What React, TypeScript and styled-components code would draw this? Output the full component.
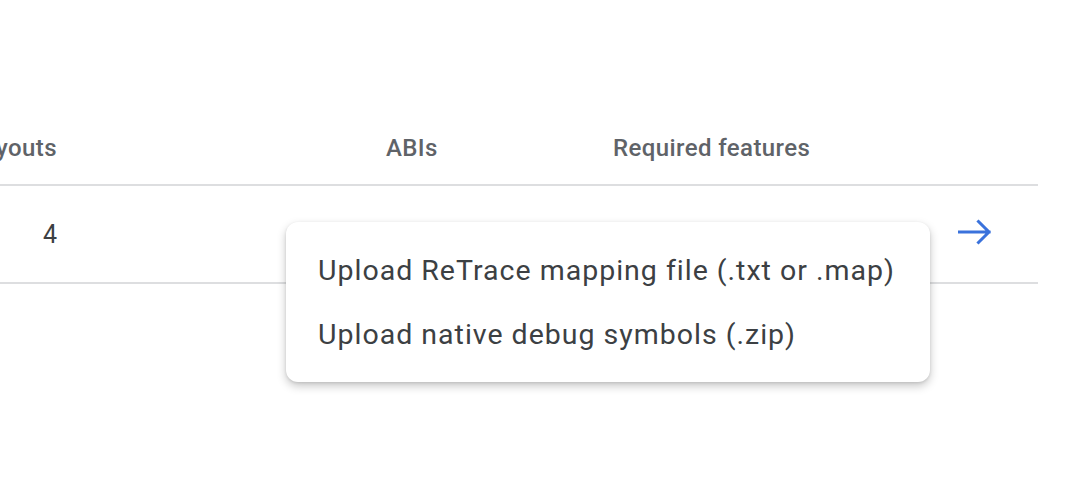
import React from "react";
import styled, { createGlobalStyle } from "styled-components";

const GlobalStyle = createGlobalStyle`
  html, body {
    margin: 0;
    padding: 0;
    background: #ffffff;
    overflow: hidden;
  }
  body {
    font-family: Roboto, "Noto Sans", "Liberation Sans", sans-serif;
  }
`;

const Page = styled.div`
  width: 1068px;
  height: 482px;
  padding-top: 112px;
  box-sizing: border-box;
`;

const Table = styled.div`
  position: relative;
  width: 1038px;
`;

const Row = styled.div<{ $head?: boolean }>`
  display: grid;
  grid-template-columns: 57px 329px 227px 345px 80px;
  align-items: center;
  height: ${(p) => (p.$head ? "72px" : "96px")};
  border-bottom: 2px solid #dddee0;
`;

const HeadCell = styled.div<{ $right?: boolean }>`
  color: #5f6368;
  font-size: 24px;
  font-weight: 500;
  letter-spacing: 0.4px;
  white-space: nowrap;
  direction: ${(p) => (p.$right ? "rtl" : "ltr")};
  text-align: ${(p) => (p.$right ? "right" : "left")};
`;

const Cell = styled.div<{ $right?: boolean }>`
  color: #3c4043;
  font-size: 25px;
  white-space: nowrap;
  text-align: ${(p) => (p.$right ? "right" : "left")};
`;

const ArrowButton = styled.div`
  display: flex;
  align-items: center;
  padding-bottom: 4px;
`;

const Menu = styled.ul`
  position: absolute;
  left: 286px;
  top: 110px;
  width: 644px;
  margin: 0;
  padding: 16px 0;
  list-style: none;
  background: #ffffff;
  border-radius: 12px;
  box-shadow: 0 4px 10px rgba(0, 0, 0, 0.22), 0 1px 3px rgba(0, 0, 0, 0.1);
`;

const MenuItem = styled.li`
  height: 64px;
  display: flex;
  align-items: center;
  padding-left: 32px;
  color: #3c4043;
  font-size: 28.5px;
  letter-spacing: 1px;
  white-space: nowrap;
`;

function ArrowIcon() {
  return (
    <svg width="34" height="26" viewBox="0 0 34 26" fill="none">
      <path
        d="M1 13H31M20.5 2.5L31 13L20.5 23.5"
        stroke="#3a72dc"
        strokeWidth="3"
        strokeLinecap="square"
      />
    </svg>
  );
}

export default function App() {
  return (
    <Page>
      <GlobalStyle />
      <Table>
        <Row $head>
          <HeadCell $right>Layouts</HeadCell>
          <div />
          <HeadCell>ABIs</HeadCell>
          <HeadCell>Required features</HeadCell>
          <div />
        </Row>
        <Row>
          <Cell $right>4</Cell>
          <div />
          <Cell />
          <Cell />
          <ArrowButton>
            <ArrowIcon />
          </ArrowButton>
        </Row>
        <Menu>
          <MenuItem>Upload ReTrace mapping file (.txt or .map)</MenuItem>
          <MenuItem>Upload native debug symbols (.zip)</MenuItem>
        </Menu>
      </Table>
    </Page>
  );
}
